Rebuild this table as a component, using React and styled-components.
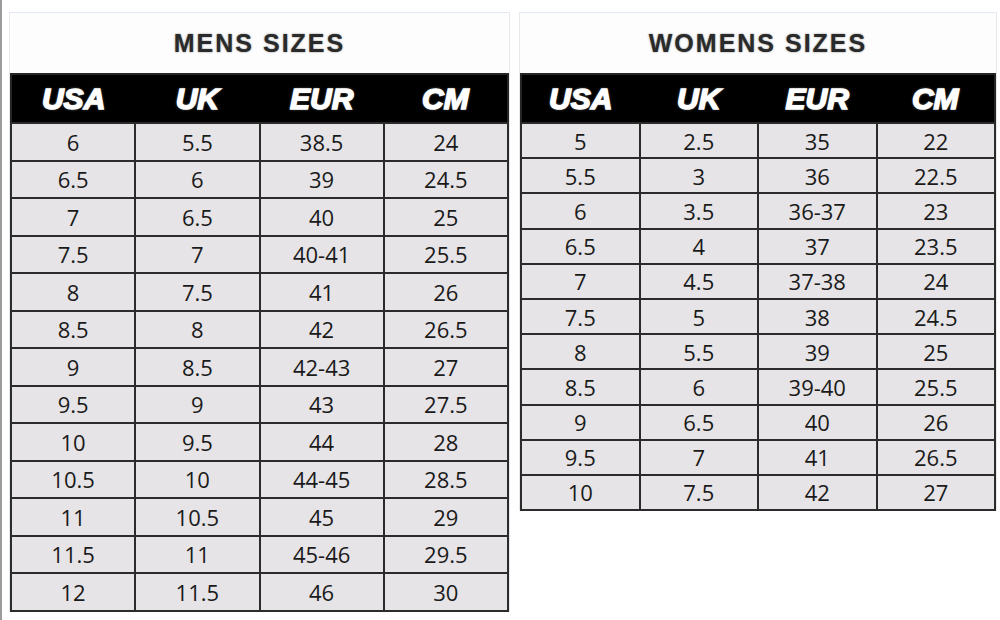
import React from "react";
import styled, { createGlobalStyle } from "styled-components";

const mens = [
  ["6", "5.5", "38.5", "24"],
  ["6.5", "6", "39", "24.5"],
  ["7", "6.5", "40", "25"],
  ["7.5", "7", "40-41", "25.5"],
  ["8", "7.5", "41", "26"],
  ["8.5", "8", "42", "26.5"],
  ["9", "8.5", "42-43", "27"],
  ["9.5", "9", "43", "27.5"],
  ["10", "9.5", "44", "28"],
  ["10.5", "10", "44-45", "28.5"],
  ["11", "10.5", "45", "29"],
  ["11.5", "11", "45-46", "29.5"],
  ["12", "11.5", "46", "30"],
];

const womens = [
  ["5", "2.5", "35", "22"],
  ["5.5", "3", "36", "22.5"],
  ["6", "3.5", "36-37", "23"],
  ["6.5", "4", "37", "23.5"],
  ["7", "4.5", "37-38", "24"],
  ["7.5", "5", "38", "24.5"],
  ["8", "5.5", "39", "25"],
  ["8.5", "6", "39-40", "25.5"],
  ["9", "6.5", "40", "26"],
  ["9.5", "7", "41", "26.5"],
  ["10", "7.5", "42", "27"],
];

const columns = ["USA", "UK", "EUR", "CM"];

const SizeChart = ({ title, rows, width, rowHeight }) => (
  <Panel $width={width}>
    <Title>{title}</Title>
    <Table>
      <thead>
        <HeadRow>
          {columns.map((c) => (
            <HeadCell key={c}>{c}</HeadCell>
          ))}
        </HeadRow>
      </thead>
      <tbody>
        {rows.map((row) => (
          <Row key={row[0]} $height={rowHeight}>
            {row.map((value, i) => (
              <Cell key={i}>{value}</Cell>
            ))}
          </Row>
        ))}
      </tbody>
    </Table>
  </Panel>
);

const App = () => (
  <>
    <GlobalStyle />
    <Frame>
      <SizeChart title="MENS SIZES" rows={mens} width={499} rowHeight={37.5} />
      <SizeChart title="WOMENS SIZES" rows={womens} width={476} rowHeight={35.2} />
    </Frame>
  </>
);

export default App;

const GlobalStyle = createGlobalStyle`
  body {
    margin: 0;
    background: #fff;
  }
`;

const Frame = styled.div`
  width: 1000px;
  height: 620px;
  box-sizing: border-box;
  border-left: 2px solid #9c9c9c;
  padding: 12px 0 0 7px;
  display: flex;
  align-items: flex-start;
  gap: 9px;
  background: #fff;
`;

const Panel = styled.div`
  width: ${(p) => p.$width}px;
  display: flex;
  flex-direction: column;
  border-top: 1px solid #e2e9f2;
  border-left: 1px solid #e6e8ec;
  border-right: 1px solid #e6e8ec;
`;

const Title = styled.div`
  height: 60px;
  display: flex;
  align-items: center;
  justify-content: center;
  font-family: "Liberation Sans", Arial, sans-serif;
  font-weight: 700;
  font-size: 25px;
  letter-spacing: 2px;
  color: #2a2a2a;
  text-shadow: 0 0 2px rgba(0, 0, 0, 0.5);
  background: #fdfdfd;
`;

const Table = styled.table`
  width: 100%;
  border-collapse: collapse;
  table-layout: fixed;
  border: 2px solid #262626;
`;

const HeadRow = styled.tr`
  height: 49px;
  background: #000;
`;

const HeadCell = styled.th`
  padding: 0;
  font-family: "Liberation Sans", Arial, sans-serif;
  font-weight: 900;
  font-style: italic;
  font-size: 30px;
  color: #fff;
  -webkit-text-stroke: 1.5px #fff;
  text-shadow: 0 0 3px rgba(255, 255, 255, 0.6);
  text-align: center;
`;

const Row = styled.tr`
  height: ${(p) => p.$height}px;
  background: #e6e4e6;
`;

const Cell = styled.td`
  padding: 0;
  border: 2px solid #2b2b2b;
  text-align: center;
  font-family: "Open Sans", "Noto Sans", sans-serif;
  font-size: 22px;
  color: #1a1a1a;
`;
